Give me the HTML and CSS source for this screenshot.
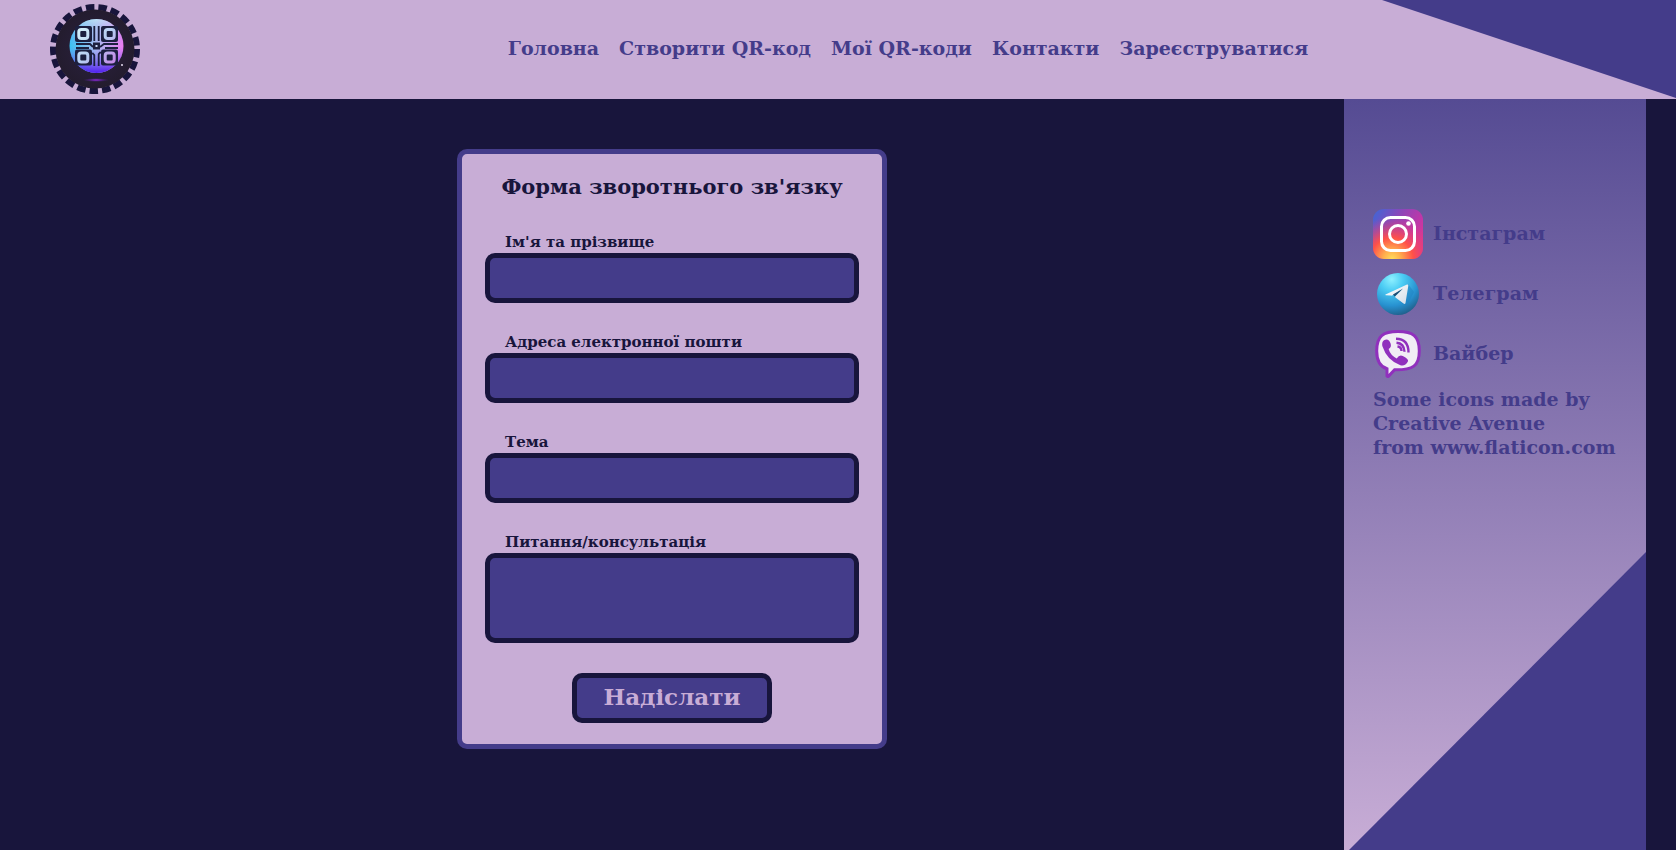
FILE: index.html
```html
<!DOCTYPE html>
<html lang="uk">
<head>
<meta charset="utf-8">
<meta name="viewport" content="width=device-width, initial-scale=1">
<title>Форма зворотнього зв'язку</title>
<link rel="stylesheet" href="styles.css">
</head>
<body>
<header class="header">
  <a class="logo" href="#" aria-label="QR">
    <svg viewBox="0 0 90 90" width="90" height="90" aria-hidden="true">
      <defs>
        <radialGradient id="disc"><stop offset="0" stop-color="#2b2140"/><stop offset="1" stop-color="#231c2e"/></radialGradient>
        <linearGradient id="orbA" gradientUnits="userSpaceOnUse" x1="19" y1="0" x2="73" y2="0"><stop offset="0" stop-color="#35c4f2"/><stop offset=".5" stop-color="#a9c0f0"/><stop offset="1" stop-color="#ec7df2"/></linearGradient>
        <linearGradient id="orbB" x1="0" y1="0" x2="0" y2="1"><stop offset="0" stop-color="#c8f4f8" stop-opacity=".6"/><stop offset=".5" stop-color="#8a70ee" stop-opacity="0"/><stop offset="1" stop-color="#4f1cf0"/></linearGradient>
        <linearGradient id="eye" gradientUnits="userSpaceOnUse" x1="28" y1="24" x2="66" y2="60"><stop offset="0" stop-color="#d4f2fa"/><stop offset=".5" stop-color="#b6cdf2"/><stop offset="1" stop-color="#c583e6"/></linearGradient>
        <radialGradient id="glow"><stop offset="0" stop-color="#a32bf0"/><stop offset="1" stop-color="#3c1c80" stop-opacity="0"/></radialGradient>
      </defs>
      <circle cx="45" cy="45" r="42" fill="none" stroke="#18153c" stroke-width="6" stroke-dasharray="8.500 4.065"/>
      <circle cx="45" cy="45" r="39.500" fill="url(#disc)"/>
      <circle cx="46.500" cy="42" r="27" fill="url(#orbA)"/>
      <circle cx="46.500" cy="42" r="27" fill="url(#orbB)"/>
      <g fill="#1c2040">
        <rect x="25" y="22" width="17" height="16" rx="2"/>
        <rect x="51" y="22" width="17" height="16" rx="2"/>
        <rect x="25" y="45.500" width="17" height="16" rx="2"/>
        <rect x="51" y="45.500" width="17" height="16" rx="2"/>
      </g>
      <g fill="none" stroke="#1c2040" stroke-width="1.800">
        <path d="M44.300 22v15M48.700 22v15M26 40h14l3 3M68 40H54l-4 3M26 44h13M68 44H55M44.300 62V51l-2-2M48.700 62V50l2-2"/>
      </g>
      <rect x="43" y="38.500" width="7" height="7" fill="#1c2040"/>
      <rect x="45.500" y="41" width="2" height="2" fill="#c8d8f8"/>
      <g fill="none" stroke="url(#eye)" stroke-width="3">
        <rect x="28.800" y="25.500" width="9" height="9" rx="2.500"/>
        <rect x="55.200" y="25.500" width="9" height="9" rx="2.500"/>
        <rect x="28.800" y="49" width="9" height="9" rx="2.500"/>
        <rect x="55.200" y="49" width="9" height="9" rx="2.500"/>
      </g>
      <ellipse cx="46" cy="76" rx="13" ry="2" fill="url(#glow)"/>
      <circle cx="72" cy="61" r="1" fill="#e6dcf0"/>
    </svg>
  </a>
  <nav class="nav">
    <a href="#">Головна</a>
    <a href="#">Створити QR-код</a>
    <a href="#">Мої QR-коди</a>
    <a href="#">Контакти</a>
    <a href="#">Зареєструватися</a>
  </nav>
</header>
<div class="page">
  <main class="content">
    <form class="form">
      <h1 class="form-title">Форма зворотнього зв'язку</h1>
      <div class="field">
        <label for="name">Ім'я та прізвище</label>
        <input id="name" type="text">
      </div>
      <div class="field">
        <label for="email">Адреса електронної пошти</label>
        <input id="email" type="email">
      </div>
      <div class="field">
        <label for="subject">Тема</label>
        <input id="subject" type="text">
      </div>
      <div class="field">
        <label for="message">Питання/консультація</label>
        <textarea id="message"></textarea>
      </div>
      <button class="submit" type="submit">Надіслати</button>
    </form>
  </main>
  <aside class="sidebar">
    <a class="social" href="#">
      <svg viewBox="0 0 50 50" width="50" height="50" aria-hidden="true">
        <defs>
          <linearGradient id="igBase" x1="0" y1="0" x2="1" y2=".6"><stop offset="0" stop-color="#3b68d8"/><stop offset=".45" stop-color="#8e45b8"/><stop offset=".8" stop-color="#c136a8"/><stop offset="1" stop-color="#d83a90"/></linearGradient>
          <radialGradient id="igWarm" cx=".38" cy="1" r=".85"><stop offset="0" stop-color="#ffdc5c"/><stop offset=".2" stop-color="#ffb04e"/><stop offset=".5" stop-color="#ff5148"/><stop offset="1" stop-color="#e0368c" stop-opacity="0"/></radialGradient>
        </defs>
        <rect width="50" height="50" rx="11" fill="url(#igBase)"/>
        <rect width="50" height="50" rx="11" fill="url(#igWarm)"/>
        <g fill="none" stroke="#fff" stroke-width="3"><rect x="8.500" y="8.500" width="33" height="33" rx="9"/><circle cx="25" cy="25" r="8.500"/></g>
        <circle cx="35.500" cy="14.500" r="2.300" fill="#fff"/>
      </svg>
      <span>Інстаграм</span>
    </a>
    <a class="social" href="#">
      <svg viewBox="0 0 50 50" width="50" height="50" aria-hidden="true">
        <defs>
          <radialGradient id="tg" cx=".35" cy=".15" r=".9"><stop offset="0" stop-color="#8ef0ff"/><stop offset=".3" stop-color="#4ccdf4"/><stop offset=".7" stop-color="#2791d0"/><stop offset="1" stop-color="#205c86"/></radialGradient>
          <linearGradient id="plane" x1="0" y1="0" x2="1" y2="1"><stop offset="0" stop-color="#fff"/><stop offset="1" stop-color="#d4dee8"/></linearGradient>
        </defs>
        <circle cx="25" cy="25" r="21" fill="url(#tg)"/>
        <path d="M35 15l6 8-7 14-7-4z" fill="#1f80c0" opacity=".5"/>
        <path d="M12.500 25.500 34 15.500q1.500-.5 1.300 1.200L32.500 34q-.4 1.800-2 .6l-8-6q-.8-.8 0-1.500l6.500-6.600-9.500 5.800q-.8.500-1.600.3l-5-.4q-1-.2-.4-.7z" fill="url(#plane)"/>
        <path d="M21.800 27.500 30 19.500l-10 6z" fill="#1f4d74"/>
      </svg>
      <span>Телеграм</span>
    </a>
    <a class="social" href="#">
      <svg viewBox="0 0 50 50" width="50" height="50" aria-hidden="true">
        <path d="M25 3.500C10 3.500 3.700 8 3.700 23c0 10 3 15.500 10.300 17.800V48q.6 1 1.400.3l6.200-6.600C40 42 46.300 38 46.300 23 46.300 8 40 3.500 25 3.500z" transform="translate(0 -1)" fill="#f1edf5" stroke="#9030bd" stroke-width="3"/>
        <path d="M11 11.200q4.500-2.600 6.600 3.300 1.200 3.500-2 5.600 1.900 6.500 8.100 9.300 2.700-4.200 6.100-2.500 6.300 3.100 5.100 5.600-2.700 5-7.500 3.700Q14 31.500 9.300 17q-.7-4 1.700-5.800z" fill="#9030bd"/>
        <g fill="none" stroke="#9030bd" stroke-width="2.400"><path d="M23 9.800Q35.500 10 35.500 23.500"/><path d="M23.500 13.800q7.500.5 8 9"/><path d="M24.500 17.500q4 .5 4 4.500"/></g>
      </svg>
      <span>Вайбер</span>
    </a>
    <p class="credits">Some icons made by<br>Creative Avenue<br>from www.flaticon.com</p>
  </aside>
</div>
</body>
</html>
```
FILE: styles.css
```css
:root {
  --night: #18153c;
  --violet: #443c8a;
  --lilac: #c8add6;
}

* {
  box-sizing: border-box;
}

body {
  display: flex;
  flex-direction: column;
  min-height: 100vh;
  margin: 0;
  background: var(--night);
  color: var(--night);
  font-family: "DejaVu Serif", serif;
  font-weight: 700;
}

a {
  color: inherit;
  text-decoration: none;
}

.header {
  position: relative;
  display: flex;
  align-items: center;
  padding: 4px 0 5px 50px;
  background: var(--lilac);
  color: var(--violet);
}

.header::after {
  content: "";
  position: absolute;
  top: 0;
  right: 0;
  width: 294px;
  height: 98px;
  background: var(--violet);
  clip-path: polygon(0 0, 100% 0, 100% 100%);
}

.logo svg {
  display: block;
}

.nav {
  display: flex;
  flex: 1;
  justify-content: center;
  gap: 20px;
  padding-bottom: 2px;
  font-size: 19px;
  line-height: 24px;
}

.page {
  display: flex;
  flex: 1;
  padding-right: 30px;
}

.content {
  flex: 1;
  padding: 50px 20px;
}

.form {
  display: flex;
  flex-direction: column;
  gap: 30px;
  max-width: 430px;
  margin: 0 auto;
  padding: 18px 23px 21px;
  border: 5px solid var(--violet);
  border-radius: 10px;
  background: var(--lilac);
}

.form-title {
  margin: 0;
  font-size: 21px;
  line-height: 30px;
  text-align: center;
  white-space: nowrap;
}

.field {
  display: flex;
  flex-direction: column;
}

.field label {
  padding: 0 0 1px 20px;
  font-size: 15px;
  line-height: 20px;
}

.field + .field {
  margin-top: -1px;
}

.field input,
.field textarea,
.submit {
  height: 50px;
  border: 5px solid var(--night);
  border-radius: 10px;
  background: var(--violet);
  color: var(--lilac);
  font: inherit;
}

.field input,
.field textarea {
  width: 100%;
  padding: 0 15px;
  font-size: 19px;
}

.field textarea {
  height: 90px;
  resize: none;
}

.submit {
  align-self: center;
  width: 200px;
  padding: 0 0 2px;
  font-size: 23px;
  line-height: 30px;
}

.sidebar {
  position: relative;
  display: flex;
  flex-direction: column;
  gap: 10px;
  width: 302px;
  padding: 110px 28px 0 29px;
  background: linear-gradient(#554b93, var(--lilac));
  color: var(--violet);
  font-size: 19px;
  line-height: 24px;
}

.sidebar::after {
  content: "";
  position: absolute;
  right: 0;
  bottom: 0;
  width: 297px;
  height: 298px;
  background: var(--violet);
  clip-path: polygon(100% 0, 100% 100%, 0 100%);
}

.social {
  display: flex;
  align-items: center;
  gap: 10px;
}

.social span {
  padding-bottom: 2px;
}

.credits {
  margin: -2px 0 0;
  white-space: nowrap;
}
```
